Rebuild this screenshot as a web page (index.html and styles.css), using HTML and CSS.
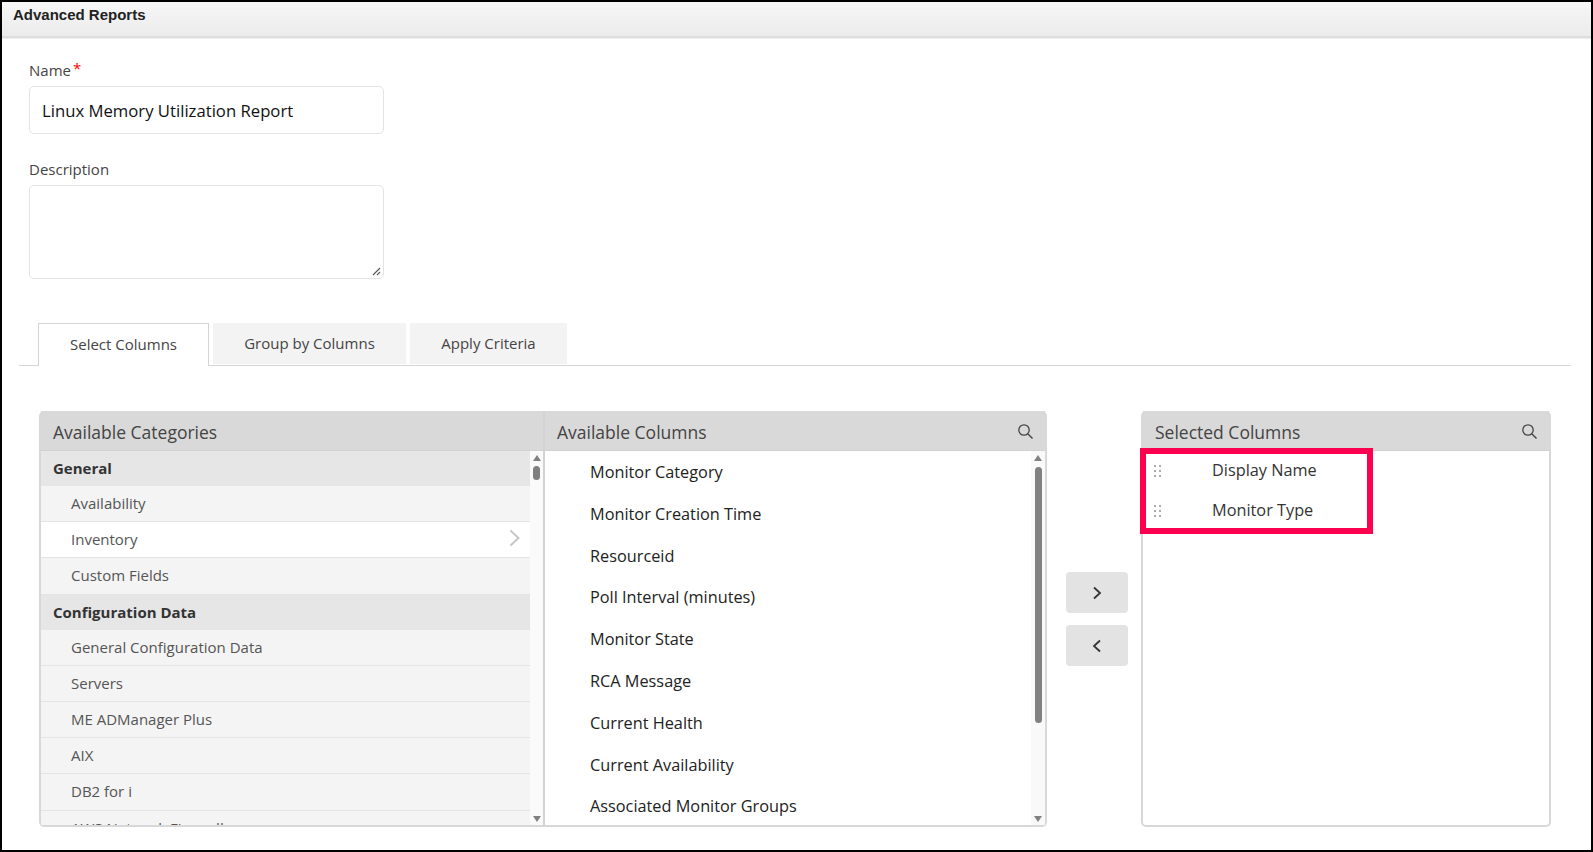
FILE: index.html
```html
<!DOCTYPE html>
<html lang="en">
<head>
<meta charset="utf-8">
<title>Advanced Reports</title>
<link rel="stylesheet" href="styles.css">
</head>
<body>
<div class="frame">
  <header class="titlebar">Advanced Reports</header>
  <main class="content">
    <div class="field">
      <label class="label">Name<span class="req">*</span></label>
      <div class="input">Linux Memory Utilization Report</div>
    </div>
    <div class="field field-desc">
      <label class="label">Description</label>
      <div class="textarea">
        <svg class="grip" width="9" height="9" viewBox="0 0 9 9"><path d="M1 8 8 1M5 8 8 5" stroke="#555" stroke-width="1.1" fill="none"/></svg>
      </div>
    </div>
    <nav class="tabs">
      <div class="tab tab-active">Select Columns</div>
      <div class="tab tab-group">Group by Columns</div>
      <div class="tab tab-apply">Apply Criteria</div>
    </nav>
    <section class="transfer">
      <div class="panel panel-available">
        <div class="col col-cat">
          <div class="panel-head">Available Categories</div>
          <div class="list-wrap">
            <ul class="cat-list">
              <li class="cat-group">General</li>
              <li class="cat-item">Availability</li>
              <li class="cat-item cat-active">Inventory
                <svg class="chev" width="11" height="18" viewBox="0 0 11 18"><path d="M1.5 1.5 9.5 9 1.5 16.5" stroke="#c4c4c4" stroke-width="1.8" fill="none"/></svg>
              </li>
              <li class="cat-item">Custom Fields</li>
              <li class="cat-group">Configuration Data</li>
              <li class="cat-item">General Configuration Data</li>
              <li class="cat-item">Servers</li>
              <li class="cat-item">ME ADManager Plus</li>
              <li class="cat-item">AIX</li>
              <li class="cat-item">DB2 for i</li>
              <li class="cat-item">AWS Network Firewall</li>
            </ul>
            <div class="scroll scroll-cat">
              <span class="arrow arrow-up"></span>
              <span class="thumb thumb-cat"></span>
              <span class="arrow arrow-down"></span>
            </div>
          </div>
        </div>
        <div class="col col-avail">
          <div class="panel-head head-split">Available Columns
            <svg class="search" width="17" height="17" viewBox="0 0 17 17"><circle cx="7" cy="7" r="5.2" stroke="#444" stroke-width="1.3" fill="none"/><path d="M11 11 15.5 15.5" stroke="#444" stroke-width="1.4"/></svg>
          </div>
          <div class="list-wrap">
            <ul class="avail-list">
              <li>Monitor Category</li>
              <li>Monitor Creation Time</li>
              <li>Resourceid</li>
              <li>Poll Interval (minutes)</li>
              <li>Monitor State</li>
              <li>RCA Message</li>
              <li>Current Health</li>
              <li>Current Availability</li>
              <li>Associated Monitor Groups</li>
            </ul>
            <div class="scroll scroll-avail">
              <span class="arrow arrow-up"></span>
              <span class="thumb thumb-avail"></span>
              <span class="arrow arrow-down"></span>
            </div>
          </div>
        </div>
      </div>
      <div class="moves">
        <button class="move" type="button" aria-label="Add">
          <svg width="10" height="14" viewBox="0 0 10 14"><path d="M2 1.5 8 7 2 12.5" stroke="#333" stroke-width="1.8" fill="none"/></svg>
        </button>
        <button class="move" type="button" aria-label="Remove">
          <svg width="10" height="14" viewBox="0 0 10 14"><path d="M8 1.5 2 7 8 12.5" stroke="#333" stroke-width="1.8" fill="none"/></svg>
        </button>
      </div>
      <div class="panel panel-selected">
        <div class="panel-head head-split">Selected Columns
          <svg class="search" width="17" height="17" viewBox="0 0 17 17"><circle cx="7" cy="7" r="5.2" stroke="#444" stroke-width="1.3" fill="none"/><path d="M11 11 15.5 15.5" stroke="#444" stroke-width="1.4"/></svg>
        </div>
        <ul class="sel-list">
          <li><svg class="drag" width="7" height="12" viewBox="0 0 7 12"><path d="M0 0h2v2H0zM5 0h2v2H5zM0 5h2v2H0zM5 5h2v2H5zM0 10h2v2H0zM5 10h2v2H5z" fill="#aaaaaa"/></svg>Display Name</li>
          <li><svg class="drag" width="7" height="12" viewBox="0 0 7 12"><path d="M0 0h2v2H0zM5 0h2v2H5zM0 5h2v2H0zM5 5h2v2H5zM0 10h2v2H0zM5 10h2v2H5z" fill="#aaaaaa"/></svg>Monitor Type</li>
        </ul>
        <div class="highlight"></div>
      </div>
    </section>
  </main>
</div>
</body>
</html>
```
FILE: styles.css
```css
* { box-sizing: border-box; }
html, body { margin: 0; padding: 0; height: 100%; background: #fff; }
body { font-family: "Open Sans", sans-serif; color: #333; overflow: hidden; }
.frame { height: 852px; width: 1593px; border: 2px solid #000; overflow: hidden; background: #fff; }
.titlebar {
  height: 36px; padding: 2px 0 0 11px;
  font: bold 15px/21px "Liberation Sans", sans-serif; color: #222;
  background: linear-gradient(#f7f7f7, #ebebeb);
  border-bottom: 2px solid #dedede;
  box-shadow: 0 1px #eeeeee;
}
.content { padding: 0 20px 0 17px; }
.field { margin-left: 10px; width: 355px; padding-top: 21px; }
.field-desc { padding-top: 24px; }
.label { display: block; height: 27px; font-size: 15px; line-height: 22px; color: #444; }
.req { color: #f00; margin-left: 2px; font-size: 15px; position: relative; top: -2px; }
.input {
  height: 48px; padding-left: 12px; border: 1px solid #e3e3e3; border-radius: 5px;
  font-size: 16.7px; line-height: 48px; color: #111;
}
.textarea { position: relative; height: 94px; border: 1px solid #e3e3e3; border-radius: 5px; }
.grip { position: absolute; right: 2px; bottom: 2px; }
.tabs { display: flex; height: 43px; margin-top: 44px; padding-left: 19px; gap: 4px; border-bottom: 1px solid #d5d5d5; font-size: 15px; }
.tab { height: 41px; background: #f3f3f3; text-align: center; line-height: 41px; color: #444; }
.tab-active { width: 171px; height: 43px; background: #fff; border: 1px solid #d5d5d5; border-bottom: 0; line-height: 41px; position: relative; }
.tab-group { width: 193px; }
.tab-apply { width: 157px; }
.transfer { display: flex; margin: 45px 0 0 20px; height: 416px; }
.panel { position: relative; border: 2px solid #d8d8d8; border-top: 0; border-radius: 5px; background: #fff; }
.panel-available { display: flex; width: 1008px; flex: none; }
.col { display: flex; flex-direction: column; }
.col-cat { width: 502px; flex: none; }
.col-avail { flex: 1; min-width: 0; border-left: 2px solid #d3d3d3; }
.panel-head {
  display: flex; align-items: center; height: 40px; flex: none; background: #d9d9d9;
  padding: 2px 0 0 12px; font-size: 17.5px; color: #444; border-bottom: 1px solid #d2d2d2;
}
.head-split { justify-content: space-between; padding-right: 11px; }
.list-wrap { display: flex; flex: 1; min-height: 0; overflow: hidden; }
ul { list-style: none; margin: 0; padding: 0; }
.cat-list { flex: 1; min-width: 0; overflow: hidden; background: #f4f4f4; }
.cat-group { height: 35px; padding-left: 12px; background: #e6e6e6; font-size: 15px; font-weight: 700; line-height: 35.5px; color: #333; }
.cat-item { position: relative; height: 36.2px; padding-left: 30px; border-bottom: 1px solid #e4e4e4; font-size: 15px; line-height: 35.7px; color: #555; }
.cat-active { background: #fff; }
.chev { position: absolute; right: 10px; top: 7px; }
.scroll { flex: none; display: flex; flex-direction: column; align-items: center; background: #fafafa; }
.scroll-cat { width: 13px; }
.scroll-avail { width: 14px; background: #f9f9f9; }
.arrow { flex: none; width: 0; height: 0; border-left: 4px solid transparent; border-right: 4px solid transparent; }
.arrow-up { border-bottom: 6px solid #808080; margin-top: 4px; }
.arrow-down { border-top: 6px solid #808080; margin-top: auto; margin-bottom: 3px; }
.thumb { flex: none; width: 7px; border-radius: 4px; background: #808080; }
.thumb-cat { height: 14px; margin-top: 5px; }
.thumb-avail { height: 256px; margin-top: 6px; }
.avail-list { flex: 1; min-width: 0; overflow: hidden; padding-left: 45px; }
.avail-list li { height: 41.8px; font-size: 16.3px; line-height: 42.5px; color: #222; white-space: nowrap; }
.moves { flex: none; width: 94px; display: flex; flex-direction: column; align-items: center; gap: 12px; padding: 161px 0 0 6px; }
.move { display: flex; align-items: center; justify-content: center; width: 62px; height: 41px; padding: 0; border: 0; border-radius: 4px; background: #e3e3e3; }
.panel-selected { flex: none; width: 410px; }
.sel-list li { position: relative; height: 39.6px; padding-left: 69px; font-size: 16.3px; line-height: 38.5px; color: #333; }
.drag { position: absolute; left: 11px; top: 14px; }
.highlight { position: absolute; left: -3px; top: 37px; width: 233px; height: 86px; border: 6px solid #ff0050; }
```
